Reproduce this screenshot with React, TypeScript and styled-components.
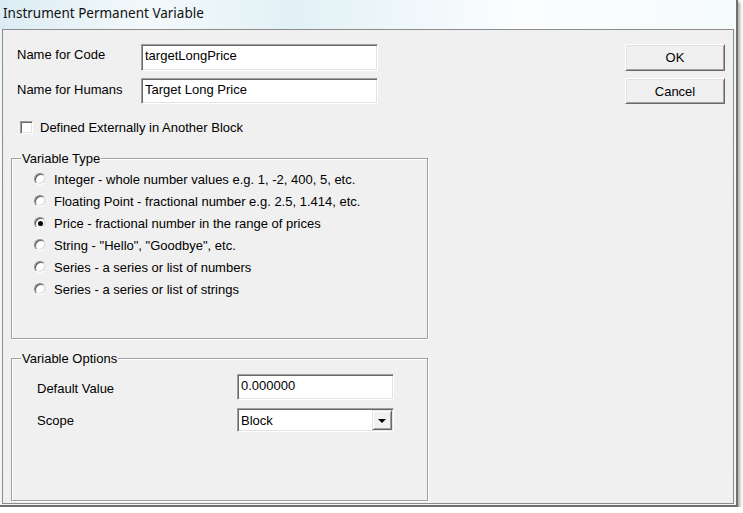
import React from 'react';
import styled, { createGlobalStyle } from 'styled-components';

const GlobalStyle = createGlobalStyle`
  html, body {
    margin: 0;
    padding: 0;
    background: #ffffff;
  }
  body {
    font-family: "Liberation Sans", Arial, sans-serif;
    font-size: 13px;
    line-height: 15px;
    color: #000;
  }
`;

/**
 * Window chrome
 */
const Window = styled.div`
  width: 736px;
  height: 505px;
  border-right: 2px solid #707070;
  border-bottom: 2px solid #707070;
  background: linear-gradient(180deg, #e6f3f8 0%, #f4fafc 30%, #eef6f9 100%);
  box-shadow: 2px 2px 3px rgba(0, 0, 0, 0.35);
  display: flex;
  flex-direction: column;
`;

const TitleBar = styled.div`
  height: 29px;
  display: flex;
  align-items: center;
  padding-left: 3px;
  padding-bottom: 3px;
  box-sizing: border-box;
  background: linear-gradient(90deg, #dcecf4 0%, #f3f9fb 20%, #e2f1f6 40%, #fbfdfe 70%, #f6fbfc 100%);
  font-family: "Noto Sans", "Open Sans", sans-serif;
  font-size: 13.5px;
  color: #111;
`;

const Client = styled.div`
  margin-left: 2px;
  width: 732px;
  height: 475px;
  box-sizing: border-box;
  border: 1px solid #8c8c8c;
  background: #f0f0f0;
  display: flex;
  padding: 14px 0 0 8px;
`;

const LeftColumn = styled.div`
  width: 417px;
  display: flex;
  flex-direction: column;
`;

const RightColumn = styled.div`
  margin-left: auto;
  margin-right: 8px;
  width: 100px;
  display: flex;
  flex-direction: column;
  gap: 7px;
`;

/**
 * Form rows
 */
const FieldRow = styled.div`
  display: flex;
  align-items: flex-start;
  padding-left: 6px;
  margin-bottom: 7px;
`;

const Label = styled.div<{ $width: number; $offset?: number }>`
  width: ${p => p.$width}px;
  flex: none;
  white-space: nowrap;
  padding-top: ${p => p.$offset ?? 3}px;
`;

const TextBox = styled.div<{ $width: number; $height?: number }>`
  width: ${p => p.$width}px;
  height: ${p => p.$height ?? 27}px;
  box-sizing: border-box;
  background: #fff;
  border: 1px solid;
  border-color: #a0a0a0 #ffffff #ffffff #a0a0a0;
  box-shadow: inset 1px 1px 0 #696969, inset -1px -1px 0 #e3e3e3;
  padding: 3px 0 0 3px;
  white-space: nowrap;
  overflow: hidden;
`;

const Combo = styled.div`
  width: 157px;
  height: 24px;
  box-sizing: border-box;
  background: #fff;
  border: 1px solid;
  border-color: #a0a0a0 #ffffff #ffffff #a0a0a0;
  box-shadow: inset 1px 1px 0 #696969, inset -1px -1px 0 #e3e3e3;
  display: flex;
  align-items: center;
  padding: 1px 1px 1px 3px;
`;

const ComboText = styled.div`
  flex: 1;
`;

const ComboButton = styled.div`
  width: 20px;
  height: 20px;
  box-sizing: border-box;
  background: #f0f0f0;
  border: 1px solid;
  border-color: #e3e3e3 #696969 #696969 #e3e3e3;
  box-shadow: inset 1px 1px 0 #fff, inset -1px -1px 0 #a0a0a0;
  display: flex;
  align-items: center;
  justify-content: center;
`;

const Arrow = styled.div`
  width: 0;
  height: 0;
  border-left: 4px solid transparent;
  border-right: 4px solid transparent;
  border-top: 4px solid #000;
  margin-top: 1px;
`;

const CheckRow = styled.div`
  display: flex;
  align-items: center;
  gap: 7px;
  padding-left: 9px;
  margin-top: 9px;
`;

const CheckBox = styled.div`
  width: 13px;
  height: 13px;
  box-sizing: border-box;
  background: #fff;
  border: 1px solid;
  border-color: #a0a0a0 #ffffff #ffffff #a0a0a0;
  box-shadow: inset 1px 1px 0 #696969, inset -1px -1px 0 #e3e3e3;
`;

/**
 * Group boxes
 */
const GroupBox = styled.div<{ $height: number; $top: number }>`
  position: relative;
  margin-top: ${p => p.$top}px;
  height: ${p => p.$height}px;
  flex: none;
  box-sizing: border-box;
  border: 1px solid #a0a0a0;
  box-shadow: inset 1px 1px 0 #fff, 1px 1px 0 #fff;
`;

const Legend = styled.span`
  position: absolute;
  top: -8px;
  left: 9px;
  padding: 0 1px;
  background: #f0f0f0;
  line-height: 15px;
`;

const RadioList = styled.div`
  padding: 9px 0 0 22px;
  display: flex;
  flex-direction: column;
`;

const RadioRow = styled.div`
  height: 22px;
  display: flex;
  align-items: center;
  gap: 8px;
  white-space: nowrap;
`;

const RadioCircle = styled.div<{ $checked?: boolean }>`
  width: 12px;
  height: 12px;
  box-sizing: border-box;
  border-radius: 50%;
  background: #fff;
  border: 1px solid;
  border-color: #8a8a8a #e6e6e6 #ffffff #8a8a8a;
  box-shadow: inset 1px 1px 0 #5a5a5a, inset -1px -1px 0 #dcdcdc;
  display: flex;
  align-items: center;
  justify-content: center;
  &::after {
    content: '';
    display: ${p => (p.$checked ? 'block' : 'none')};
    width: 5px;
    height: 5px;
    border-radius: 50%;
    background: #000;
  }
`;

const OptionsBody = styled.div`
  padding: 15px 0 0 25px;
  display: flex;
  flex-direction: column;
  gap: 8px;
`;

const OptionRow = styled.div`
  display: flex;
  align-items: flex-start;
`;

/**
 * Buttons
 */
const Button = styled.div<{ $height: number }>`
  height: ${p => p.$height}px;
  box-sizing: border-box;
  background: #f0f0f0;
  border: 1px solid;
  border-color: #ffffff #696969 #696969 #ffffff;
  box-shadow: inset 1px 1px 0 #e3e3e3, inset -1px -1px 0 #a0a0a0;
  display: flex;
  align-items: center;
  justify-content: center;
`;

const variableTypes = [
  'Integer - whole number values e.g. 1, -2, 400, 5, etc.',
  'Floating Point - fractional number e.g. 2.5, 1.414, etc.',
  'Price - fractional number in the range of prices',
  'String - "Hello", "Goodbye", etc.',
  'Series - a series or list of numbers',
  'Series - a series or list of strings',
];

export default function App() {
  return (
    <>
      <GlobalStyle />
      <Window>
        <TitleBar>Instrument Permanent Variable</TitleBar>
        <Client>
          <LeftColumn>
            <FieldRow>
              <Label $width={124}>Name for Code</Label>
              <TextBox $width={237}>targetLongPrice</TextBox>
            </FieldRow>
            <FieldRow>
              <Label $width={124} $offset={4}>Name for Humans</Label>
              <TextBox $width={237} $height={26}>Target Long Price</TextBox>
            </FieldRow>
            <CheckRow>
              <CheckBox />
              <span>Defined Externally in Another Block</span>
            </CheckRow>
            <GroupBox $top={23} $height={181}>
              <Legend>Variable Type</Legend>
              <RadioList>
                {variableTypes.map((t, i) => (
                  <RadioRow key={t}>
                    <RadioCircle $checked={i === 2} />
                    <span>{t}</span>
                  </RadioRow>
                ))}
              </RadioList>
            </GroupBox>
            <GroupBox $top={19} $height={143}>
              <Legend>Variable Options</Legend>
              <OptionsBody>
                <OptionRow>
                  <Label $width={200} $offset={7}>Default Value</Label>
                  <TextBox $width={157} $height={26}>0.000000</TextBox>
                </OptionRow>
                <OptionRow>
                  <Label $width={200} $offset={5}>Scope</Label>
                  <Combo>
                    <ComboText>Block</ComboText>
                    <ComboButton>
                      <Arrow />
                    </ComboButton>
                  </Combo>
                </OptionRow>
              </OptionsBody>
            </GroupBox>
          </LeftColumn>
          <RightColumn>
            <Button $height={27}>OK</Button>
            <Button $height={26}>Cancel</Button>
          </RightColumn>
        </Client>
      </Window>
    </>
  );
}
